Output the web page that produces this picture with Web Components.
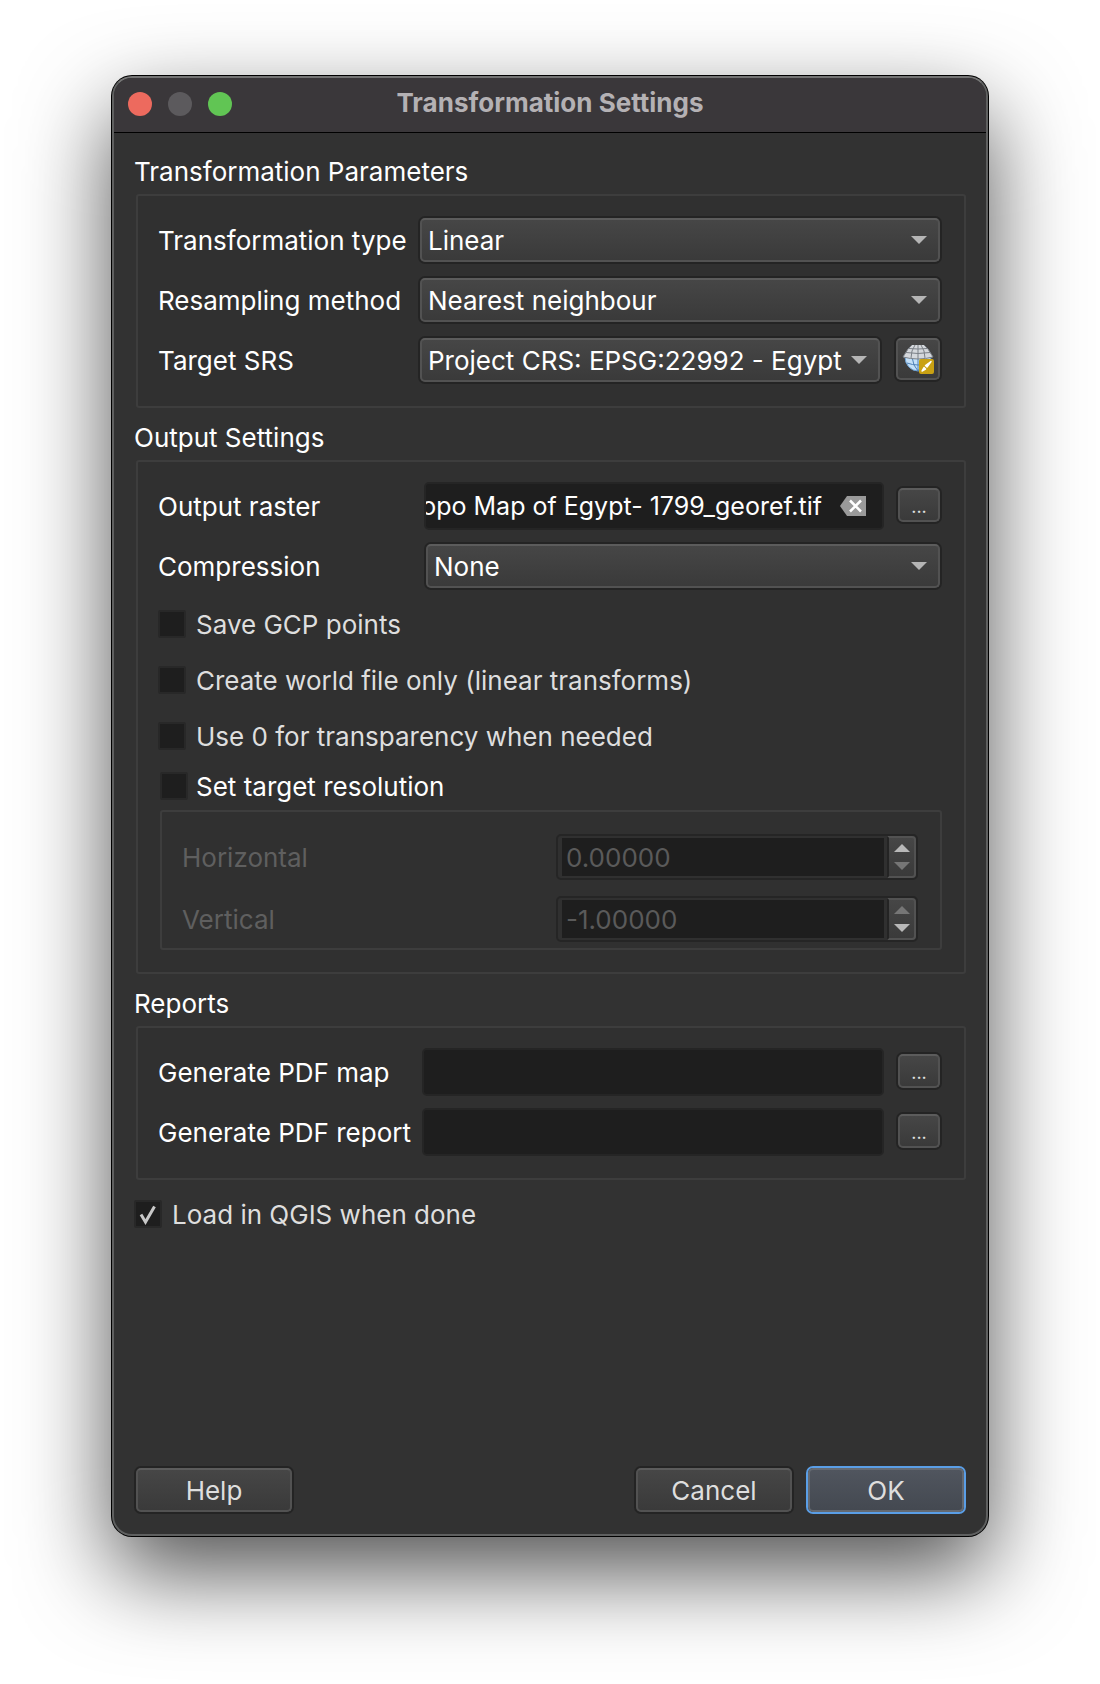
<!DOCTYPE html>
<html lang="en">
<head>
<meta charset="utf-8">
<meta name="viewport" content="width=device-width, initial-scale=1">
<title>Transformation Settings</title>
<style>
  body {
    margin: 0;
    min-height: 100vh;
    box-sizing: border-box;
    padding: 76px 112px 148px;
    display: flex;
    background: #fff;
    color: #fff;
    font: 26px/32px Inter, "Liberation Sans", sans-serif;
  }
  dialog-window { flex: 1; min-width: 0; }
</style>
</head>
<body>
<dialog-window heading="Transformation Settings">
  <group-box heading="Transformation Parameters" style="--label-width: 260px">
    <combo-field label="Transformation type" value="Linear"></combo-field>
    <combo-field label="Resampling method" value="Nearest neighbour"></combo-field>
    <combo-field label="Target SRS" value="Project CRS: EPSG:22992 - Egypt">
      <crs-button slot="action"></crs-button>
    </combo-field>
  </group-box>
  <group-box heading="Output Settings" style="--label-width: 266px">
    <path-field label="Output raster" value="Topo Map of Egypt- 1799_georef.tif" clearable></path-field>
    <combo-field label="Compression" value="None"></combo-field>
    <check-list>
      <check-field>Save GCP points</check-field>
      <check-field>Create world file only (linear transforms)</check-field>
      <check-field>Use 0 for transparency when needed</check-field>
    </check-list>
    <check-group heading="Set target resolution">
      <spin-field label="Horizontal" value="0.00000" limit="down"></spin-field>
      <spin-field label="Vertical" value="-1.00000" limit="up"></spin-field>
    </check-group>
  </group-box>
  <group-box heading="Reports" style="--label-width: 264px">
    <path-field label="Generate PDF map"></path-field>
    <path-field label="Generate PDF report"></path-field>
  </group-box>
  <check-field class="load" checked>Load in QGIS when done</check-field>
  <push-button slot="help">Help</push-button>
  <push-button slot="actions">Cancel</push-button>
  <push-button slot="actions" primary>OK</push-button>
</dialog-window>

<script>
const base = `
  *, *::before, *::after { box-sizing: border-box; }
  button, input, select { font: inherit; color: inherit; margin: 0; }
  .raised {
    border: 2px solid #525252;
    border-top-color: #5c5c5c;
    border-radius: 5px;
    background: linear-gradient(#464646, #3a3a3a);
    box-shadow: 0 0 0 2px #242424;
  }
`;

const row = `
  :host { display: flex; align-items: center; }
  label { flex: 0 0 var(--label-width); padding-top: 2px; white-space: nowrap; }
`;

class Base extends HTMLElement {
  connectedCallback() {
    if (this.shadowRoot) return;
    const root = this.attachShadow({ mode: "open" });
    root.innerHTML = `<style>${base}${this.css()}</style>${this.html()}`;
    this.ready(root);
  }
  attr(name) { return this.getAttribute(name) || ""; }
  css() { return ""; }
  html() { return "<slot></slot>"; }
  ready() {}
}

customElements.define("dialog-window", class extends Base {
  css() { return `
    :host {
      display: flex; flex-direction: column; box-sizing: border-box;
      border: 2px solid #5f6060; border-top-color: #747474; border-radius: 20px;
      background: #323232;
      box-shadow: 0 0 0 1px #000, 0 36px 90px rgba(0, 0, 0, .69);
    }
    header {
      display: grid; grid-template-columns: 1fr auto 1fr; align-items: center;
      height: 55px; padding: 0 14px 3px; background: #3a373a;
      border-bottom: 1px solid #000; border-radius: 18px 18px 0 0;
    }
    .lights { display: flex; gap: 16px; }
    .lights button { width: 24px; height: 24px; padding: 0; border: 0; border-radius: 50%; background: #5c5a5d; }
    .lights .close { background: #ed6a5e; }
    .lights .zoom { background: #61c554; }
    h1 { margin: 0; padding-bottom: 2px; font-size: 26px; line-height: 32px; font-weight: 700; color: #b4b1b4; }
    main { flex: 1; display: flex; flex-direction: column; padding: 9px 20px 20px; }
    footer { display: flex; justify-content: space-between; margin-top: auto; padding-top: 40px; }
    .actions { display: flex; gap: 12px; }
    ::slotted(group-box) { margin: 14px 0 0 2px; }
    ::slotted(.load) { margin-top: 20px; }
  `; }
  html() { return `
    <header>
      <div class="lights">
        <button class="close" aria-label="Close"></button>
        <button disabled aria-label="Minimize"></button>
        <button class="zoom" aria-label="Zoom"></button>
      </div>
      <h1>${this.attr("heading")}</h1>
    </header>
    <main>
      <slot></slot>
      <footer><slot name="help"></slot><div class="actions"><slot name="actions"></slot></div></footer>
    </main>`; }
});

customElements.define("group-box", class extends Base {
  css() { return `
    :host { display: block; }
    h2 { margin: 0 0 6px -2px; font-size: 26px; line-height: 32px; font-weight: 400; }
    .box {
      display: flex; flex-direction: column; gap: 12px;
      padding: 20px 22px 22px 20px;
      border: 2px solid #3d3d3d; border-radius: 3px; background: #303030;
    }
  `; }
  html() { return `
    <h2 id="heading">${this.attr("heading")}</h2>
    <div class="box" role="group" aria-labelledby="heading"><slot></slot></div>`; }
});

customElements.define("combo-field", class extends Base {
  css() { return row + `
    .combo { flex: 1; min-width: 0; display: grid; align-items: center; padding: 2px; }
    .combo > * { grid-area: 1 / 1; }
    select {
      appearance: none; width: 100%; height: 44px; outline: 0;
      padding: 2px 30px 0 6px;
    }
    svg { justify-self: end; margin-right: 13px; pointer-events: none; }
    ::slotted(*) { margin-left: 12px; }
  `; }
  html() { return `
    <label for="field">${this.attr("label")}</label>
    <div class="combo">
      <select id="field" class="raised"><option>${this.attr("value")}</option></select>
      <svg width="16" height="8" viewBox="0 0 16 8"><path d="M0 0h16L8 8z" fill="#b5b5b5"/></svg>
    </div>
    <slot name="action"></slot>`; }
});

customElements.define("crs-button", class extends Base {
  css() { return `
    :host { display: block; align-self: flex-start; padding: 2px; }
    button { display: flex; align-items: center; justify-content: center; width: 44px; height: 42px; padding: 0; }
  `; }
  html() { return `
    <button class="raised" aria-label="Select CRS">
      <svg width="32" height="32" viewBox="0 0 32 32" fill="none">
        <path d="M3 14a13 14 0 0 0 26 0z" fill="#c4e0f8" stroke="#6b9fd0"/>
        <path d="M5 20q11 4 22 0M10 14q1 9 6 14q5-5 6-14M16 14v14" stroke="#4f82b8"/>
        <path d="M10 2h12l4 4 5 8q-15 4-30 0l5-8z" fill="#d5d8dc"/>
        <path d="M7 5.500q9 1 18 0M4 9.500q12 2 24 0M1 14q15 4 30 0M10 2L6 6 1 14M13 2l-3 6-1 7M16 2v14M19 2l3 6 1 7M22 2l4 4 5 8" stroke="#7b8087"/>
        <rect x="17" y="16" width="15" height="15" rx="2" fill="#c9a113"/>
        <path d="M29 18.500l-5.500 4 1.500 1.500zM22 24.500l1.500 1.500-3.500 2z" fill="#fff" stroke="#fff" stroke-width="1.500" stroke-linejoin="round"/>
      </svg>
    </button>`; }
});

customElements.define("path-field", class extends Base {
  css() { return row + `
    .text {
      flex: 1; min-width: 0; height: 48px; display: flex; align-items: center;
      border: 2px solid #252525; border-radius: 5px; background: #1e1e1e;
    }
    input {
      flex: 1; min-width: 0; height: 44px; padding: 0; border: 0; outline: 0;
      background: none; font-size: 25px; text-align: right;
    }
    .clear { display: flex; margin: 0 16px 0 18px; padding: 0; border: 0; background: none; }
    .browse {
      align-self: flex-start;
      width: 42px; height: 34px; margin: 6px 2px 0 14px; padding: 4px 0 0;
      font-size: 18px; line-height: 22px; color: #e0e0e0;
    }
  `; }
  html() {
    const clear = this.hasAttribute("clearable") ? `
      <button class="clear" aria-label="Clear">
        <svg width="26" height="20" viewBox="0 0 26 20">
          <path d="M0 10L7 0h19v20H7z" fill="#9a9a9a"/>
          <path d="M10 4.500l11 11M21 4.500l-11 11" stroke="#fff" stroke-width="2.500"/>
        </svg>
      </button>` : "";
    return `
      <label for="field">${this.attr("label")}</label>
      <div class="text"><input id="field" type="text" value="${this.attr("value")}">${clear}</div>
      <button class="raised browse" aria-label="Browse">...</button>`;
  }
  ready(root) {
    const input = root.querySelector("input");
    const showEnd = () => { input.scrollLeft = input.scrollWidth; };
    showEnd();
    addEventListener("load", showEnd);
    document.fonts.ready.then(showEnd);
  }
});

const check = `
  label { display: flex; align-items: center; width: fit-content; }
  input {
    appearance: none; flex: none; width: 28px; height: 28px;
    border: 2px solid #282828; border-radius: 2px; background: #1e1e1e;
  }
  span { padding-top: 2px; line-height: 26px; }
`;

customElements.define("check-field", class extends Base {
  css() { return check + `
    :host { display: block; height: 28px; color: #dedede; }
    label { gap: 10px; }
    .tick { display: grid; }
    .tick > * { grid-area: 1 / 1; }
    svg { pointer-events: none; display: none; }
    input:checked + svg { display: block; }
  `; }
  html() { return `
    <label>
      <div class="tick">
        <input type="checkbox" ${this.hasAttribute("checked") ? "checked" : ""}>
        <svg width="28" height="28" viewBox="0 0 28 28"><path d="M7 14.500l4.500 7.500L20.500 6.500" fill="none" stroke="#c8c8c8" stroke-width="3"/></svg>
      </div>
      <span><slot></slot></span>
    </label>`; }
});

customElements.define("check-list", class extends Base {
  css() { return `:host { display: flex; flex-direction: column; gap: 28px; padding: 8px 0 10px; }`; }
});

customElements.define("check-group", class extends Base {
  css() { return check + `
    :host { display: block; padding-left: 2px; }
    label { gap: 8px; height: 28px; }
    .box {
      display: flex; flex-direction: column; gap: 16px;
      margin-top: 10px; padding: 22px 22px 6px 20px;
      border: 2px solid #3d3d3d; border-radius: 3px;
    }
  `; }
  html() { return `
    <label><input type="checkbox"><span id="heading">${this.attr("heading")}</span></label>
    <div class="box" role="group" aria-labelledby="heading"><slot></slot></div>`; }
});

customElements.define("spin-field", class extends Base {
  css() { return `
    :host { display: grid; grid-template-columns: 374px minmax(0, 1fr); align-items: center; color: #5f5f5f; }
    label { padding-top: 2px; }
    .spin { display: flex; height: 46px; border: 2px solid #252525; border-radius: 5px; background: #303030; }
    input {
      appearance: textfield; flex: 1; min-width: 0; margin: 2px 3px 2px 4px; padding: 2px 4px 0;
      border: 0; border-radius: 0; background: #1e1e1e; color: #5a5a5a;
    }
    input::-webkit-inner-spin-button { display: none; }
    .steps {
      display: flex; flex-direction: column; justify-content: center; gap: 10px; width: 29px;
      border: 2px solid #525252; border-left-color: #242424; border-radius: 0 4px 4px 0;
      background: linear-gradient(#464646, #3a3a3a);
    }
    .steps button { display: flex; justify-content: center; padding: 0; border: 0; background: none; color: #b8b8b8; }
    .steps .${this.attr("limit")} { color: #767676; }
  `; }
  html() { return `
    <label for="field">${this.attr("label")}</label>
    <div class="spin">
      <input id="field" type="number" step="any" value="${this.attr("value")}" disabled>
      <div class="steps">
        <button class="up" disabled aria-label="Increase"><svg width="16" height="8" viewBox="0 0 16 8"><path d="M0 8h16L8 0z" fill="currentColor"/></svg></button>
        <button class="down" disabled aria-label="Decrease"><svg width="16" height="8" viewBox="0 0 16 8"><path d="M0 0h16L8 8z" fill="currentColor"/></svg></button>
      </div>
    </div>`; }
});

customElements.define("push-button", class extends Base {
  css() { return `
    :host { display: block; padding: 2px; color: #dedede; }
    button { width: 156px; height: 44px; padding: 2px 0 0; }
    :host([primary]) button {
      background: linear-gradient(#50555e, #444951);
      border-color: #656a72;
      box-shadow: 0 0 0 2px #5a9ee6;
    }
  `; }
  html() { return `<button class="raised"><slot></slot></button>`; }
});
</script>
</body>
</html>
